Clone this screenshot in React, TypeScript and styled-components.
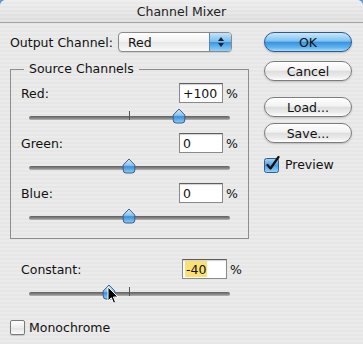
import { FC } from "react";
import styled, { createGlobalStyle } from "styled-components";

const GlobalStyle = createGlobalStyle`
	html, body {
		margin: 0;
		width: 363px;
		height: 344px;
		overflow: hidden;
		background: #5d9bd3;
	}
`;

interface ChannelProps {
	label: string;
	value: number;
	text: string;
	selected?: boolean;
	pointer?: boolean;
}

const channels = [
	{ label: "Red:", value: 100, text: "+100" },
	{ label: "Green:", value: 0, text: "0" },
	{ label: "Blue:", value: 0, text: "0" },
];

const Thumb: FC<{ left: number }> = ({ left }) => (
	<ThumbWrap style={{ left: left - 7 }}>
		<svg width="14" height="16" viewBox="0 0 14 16">
			<defs>
				<linearGradient id="thumbFill" x1="0" y1="0" x2="0" y2="1">
					<stop offset="0" stopColor="#d6ecfb" />
					<stop offset="0.45" stopColor="#8cc4ee" />
					<stop offset="0.55" stopColor="#3b8fd9" />
					<stop offset="1" stopColor="#8fd0f7" />
				</linearGradient>
			</defs>
			<path
				d="M7 1 L12.8 7 L12.8 12 Q12.8 15 10 15 L4 15 Q1.2 15 1.2 12 L1.2 7 Z"
				fill="url(#thumbFill)"
				stroke="#3d5f86"
				strokeWidth="1"
			/>
		</svg>
	</ThumbWrap>
);

const Pointer = () => (
	<PointerWrap>
		<svg width="12" height="19" viewBox="0 0 12 19">
			<path
				d="M1 1 L1 15 L4.3 11.8 L6.6 17.2 L8.6 16.3 L6.4 11 L11 11 Z"
				fill="#000"
				stroke="#fff"
				strokeWidth="1"
				strokeLinejoin="round"
			/>
		</svg>
	</PointerWrap>
);

const Slider: FC<{ value: number; pointer?: boolean }> = ({ value, pointer }) => (
	<SliderRow>
		<Track>
			<Tick />
			<Thumb left={((value + 200) / 400) * 200} />
		</Track>
		{pointer && <Pointer />}
	</SliderRow>
);

const Channel: FC<ChannelProps> = ({ label, value, text, selected, pointer }) => (
	<ChannelBlock>
		<ValueRow>
			<FieldLabel>{label}</FieldLabel>
			<NumberBox>
				<NumberText $selected={selected}>{text}</NumberText>
			</NumberBox>
			<Percent>%</Percent>
		</ValueRow>
		<Slider value={value} pointer={pointer} />
	</ChannelBlock>
);

export default function App() {
	return (
		<>
			<GlobalStyle />
			<Window>
				<TitleBar>Channel Mixer</TitleBar>
				<Body>
					<LeftPane>
						<OutputRow>
							<OutputLabel>Output Channel:</OutputLabel>
							<Popup>
								<PopupText>Red</PopupText>
								<Stepper>
									<svg width="8" height="12" viewBox="0 0 8 12">
										<path d="M4 1 L7 5 L1 5 Z" fill="#10223a" />
										<path d="M4 11 L7 7 L1 7 Z" fill="#10223a" />
									</svg>
								</Stepper>
							</Popup>
						</OutputRow>
						<GroupBox>
							<Legend>Source Channels</Legend>
							{channels.map((c) => (
								<Channel key={c.label} {...c} />
							))}
						</GroupBox>
						<ConstantArea>
							<Channel label="Constant:" value={-40} text="-40" selected pointer />
						</ConstantArea>
						<CheckRow>
							<EmptyBox />
							<CheckText>Monochrome</CheckText>
						</CheckRow>
					</LeftPane>
					<RightPane>
						<Button $primary>OK</Button>
						<Button $gap={9}>Cancel</Button>
						<Button $gap={16}>Load...</Button>
						<Button $gap={6}>Save...</Button>
						<PreviewRow>
							<svg width="17" height="17" viewBox="0 0 17 17">
								<defs>
									<linearGradient id="boxFill" x1="0" y1="0" x2="0" y2="1">
										<stop offset="0" stopColor="#a9d6f7" />
										<stop offset="0.5" stopColor="#4b9fe6" />
										<stop offset="1" stopColor="#9ad6fa" />
									</linearGradient>
								</defs>
								<rect x="0.5" y="2.5" width="14" height="14" rx="2" fill="url(#boxFill)" stroke="#3a5c86" />
								<path d="M3.5 9 L6.5 12.5 L14.5 1" fill="none" stroke="#111" strokeWidth="2.2" strokeLinecap="round" strokeLinejoin="round" />
							</svg>
							<CheckText>Preview</CheckText>
						</PreviewRow>
					</RightPane>
				</Body>
			</Window>
		</>
	);
}

const Window = styled.div`
	width: 363px;
	height: 344px;
	border-radius: 6px 6px 0 0;
	overflow: hidden;
	display: flex;
	flex-direction: column;
	font-family: "DejaVu Sans", "Liberation Sans", sans-serif;
	font-size: 12px;
	color: #111;
	background: repeating-linear-gradient(
		to bottom,
		#ebebeb 0px,
		#ebebeb 2px,
		#e6e6e6 2px,
		#e6e6e6 4px
	);
`;

const TitleBar = styled.div`
	height: 22px;
	flex: 0 0 22px;
	display: flex;
	align-items: center;
	justify-content: center;
	font-size: 12.5px;
	color: #222;
	border-bottom: 1px solid #a3a3a3;
	background: repeating-linear-gradient(
			to bottom,
			rgba(255, 255, 255, 0.2) 0px,
			rgba(255, 255, 255, 0.2) 2px,
			transparent 2px,
			transparent 4px
		),
		linear-gradient(to bottom, #ebebeb, #dcdcdc);
`;

const Body = styled.div`
	display: flex;
	flex: 1;
`;

const LeftPane = styled.div`
	width: 254px;
	box-sizing: border-box;
	padding: 9px 0 0 10px;
	display: flex;
	flex-direction: column;
`;

const OutputRow = styled.div`
	display: flex;
	align-items: center;
	height: 20px;
`;

const OutputLabel = styled.span`
	width: 108px;
	font-size: 12.5px;
`;

const Popup = styled.div`
	width: 114px;
	height: 20px;
	box-sizing: border-box;
	border: 1px solid #8a8a8a;
	border-radius: 4px;
	display: flex;
	align-items: stretch;
	overflow: hidden;
	background: linear-gradient(to bottom, #ffffff, #f1f1f1 50%, #e6e6e6 51%, #fafafa);
	box-shadow: 0 1px 1px rgba(0, 0, 0, 0.12);
`;

const PopupText = styled.span`
	flex: 1;
	display: flex;
	align-items: center;
	padding-left: 9px;
	font-size: 12.5px;
`;

const Stepper = styled.div`
	width: 21px;
	display: flex;
	align-items: center;
	justify-content: center;
	border-left: 1px solid #5f84ad;
	background: linear-gradient(to bottom, #c4e3fa, #79bdf0 48%, #3f96e0 52%, #8fd2fb);
`;

const GroupBox = styled.fieldset`
	margin: 10px 0 0 0;
	width: 239px;
	box-sizing: border-box;
	padding: 7px 10px 5px 10px;
	border: 1px solid #8d8d8d;
	min-inline-size: 0;
`;

const Legend = styled.legend`
	padding: 0 5px;
	margin-left: 3px;
	line-height: 14px;
	font-size: 12.5px;
`;

const ChannelBlock = styled.div`
	display: flex;
	flex-direction: column;
`;

const ValueRow = styled.div`
	display: flex;
	align-items: center;
	height: 20px;
`;

const FieldLabel = styled.span`
	width: 161px;
	font-size: 12.5px;
`;

const NumberBox = styled.div`
	width: 45px;
	height: 20px;
	box-sizing: border-box;
	border: 1px solid #8a8a8a;
	border-top-color: #5e5e5e;
	background: #fff;
	box-shadow: inset 0 1px 1px rgba(0, 0, 0, 0.18);
	display: flex;
	align-items: stretch;
	padding: 1px 0 1px 2px;
`;

const NumberText = styled.span<{ $selected?: boolean }>`
	display: flex;
	align-items: center;
	padding: 0 1px;
	font-size: 12.5px;
	background: ${({ $selected }) => ($selected ? "#fbe173" : "transparent")};
`;

const Percent = styled.span`
	margin-left: 3px;
	font-size: 12.5px;
`;

const SliderRow = styled.div`
	position: relative;
	height: 30px;
	display: flex;
	align-items: center;
`;

const Track = styled.div`
	position: relative;
	margin-left: 8px;
	width: 201px;
	height: 4px;
	border-radius: 2px;
	background: linear-gradient(to bottom, #5f5f5f, #8a8a8a 60%, #b5b5b5);
`;

const Tick = styled.div`
	position: absolute;
	left: 100px;
	top: -5px;
	width: 1px;
	height: 9px;
	background: #555;
`;

const ThumbWrap = styled.div`
	position: absolute;
	top: -8px;
	width: 14px;
	height: 16px;
	display: flex;
`;

const PointerWrap = styled.div`
	position: absolute;
	left: 86px;
	top: 7px;
	display: flex;
`;

const ConstantArea = styled.div`
	margin-top: 20px;
	padding-left: 11px;
`;

const CheckRow = styled.div`
	display: flex;
	align-items: center;
	margin-top: 10px;
	height: 16px;
`;

const EmptyBox = styled.div`
	width: 13px;
	height: 13px;
	border: 1px solid #7a7a7a;
	border-radius: 2px;
	background: linear-gradient(to bottom, #ffffff, #ededed 50%, #e2e2e2 51%, #fbfbfb);
	box-shadow: 0 1px 1px rgba(0, 0, 0, 0.15);
`;

const CheckText = styled.span`
	margin-left: 4px;
	font-size: 12.5px;
`;

const RightPane = styled.div`
	padding: 9px 0 0 10px;
	display: flex;
	flex-direction: column;
`;

const Button = styled.div<{ $primary?: boolean; $gap?: number }>`
	width: 88px;
	height: 20px;
	box-sizing: border-box;
	margin-top: ${({ $gap }) => $gap ?? 0}px;
	border-radius: 10px;
	display: flex;
	align-items: center;
	justify-content: center;
	font-size: 12.5px;
	border: 1px solid ${({ $primary }) => ($primary ? "#2d5a93" : "#7d7d7d")};
	background: ${({ $primary }) =>
		$primary
			? "linear-gradient(to bottom, #cbe8fc, #7ec1f2 45%, #3a93e0 52%, #5fb3f0 80%, #a8dcfb)"
			: "linear-gradient(to bottom, #ffffff, #f2f2f2 45%, #dedede 52%, #ececec 80%, #ffffff)"};
	box-shadow: 0 1px 2px rgba(0, 0, 0, 0.2);
`;

const PreviewRow = styled.div`
	display: flex;
	align-items: center;
	margin-top: 13px;
	height: 17px;
`;
